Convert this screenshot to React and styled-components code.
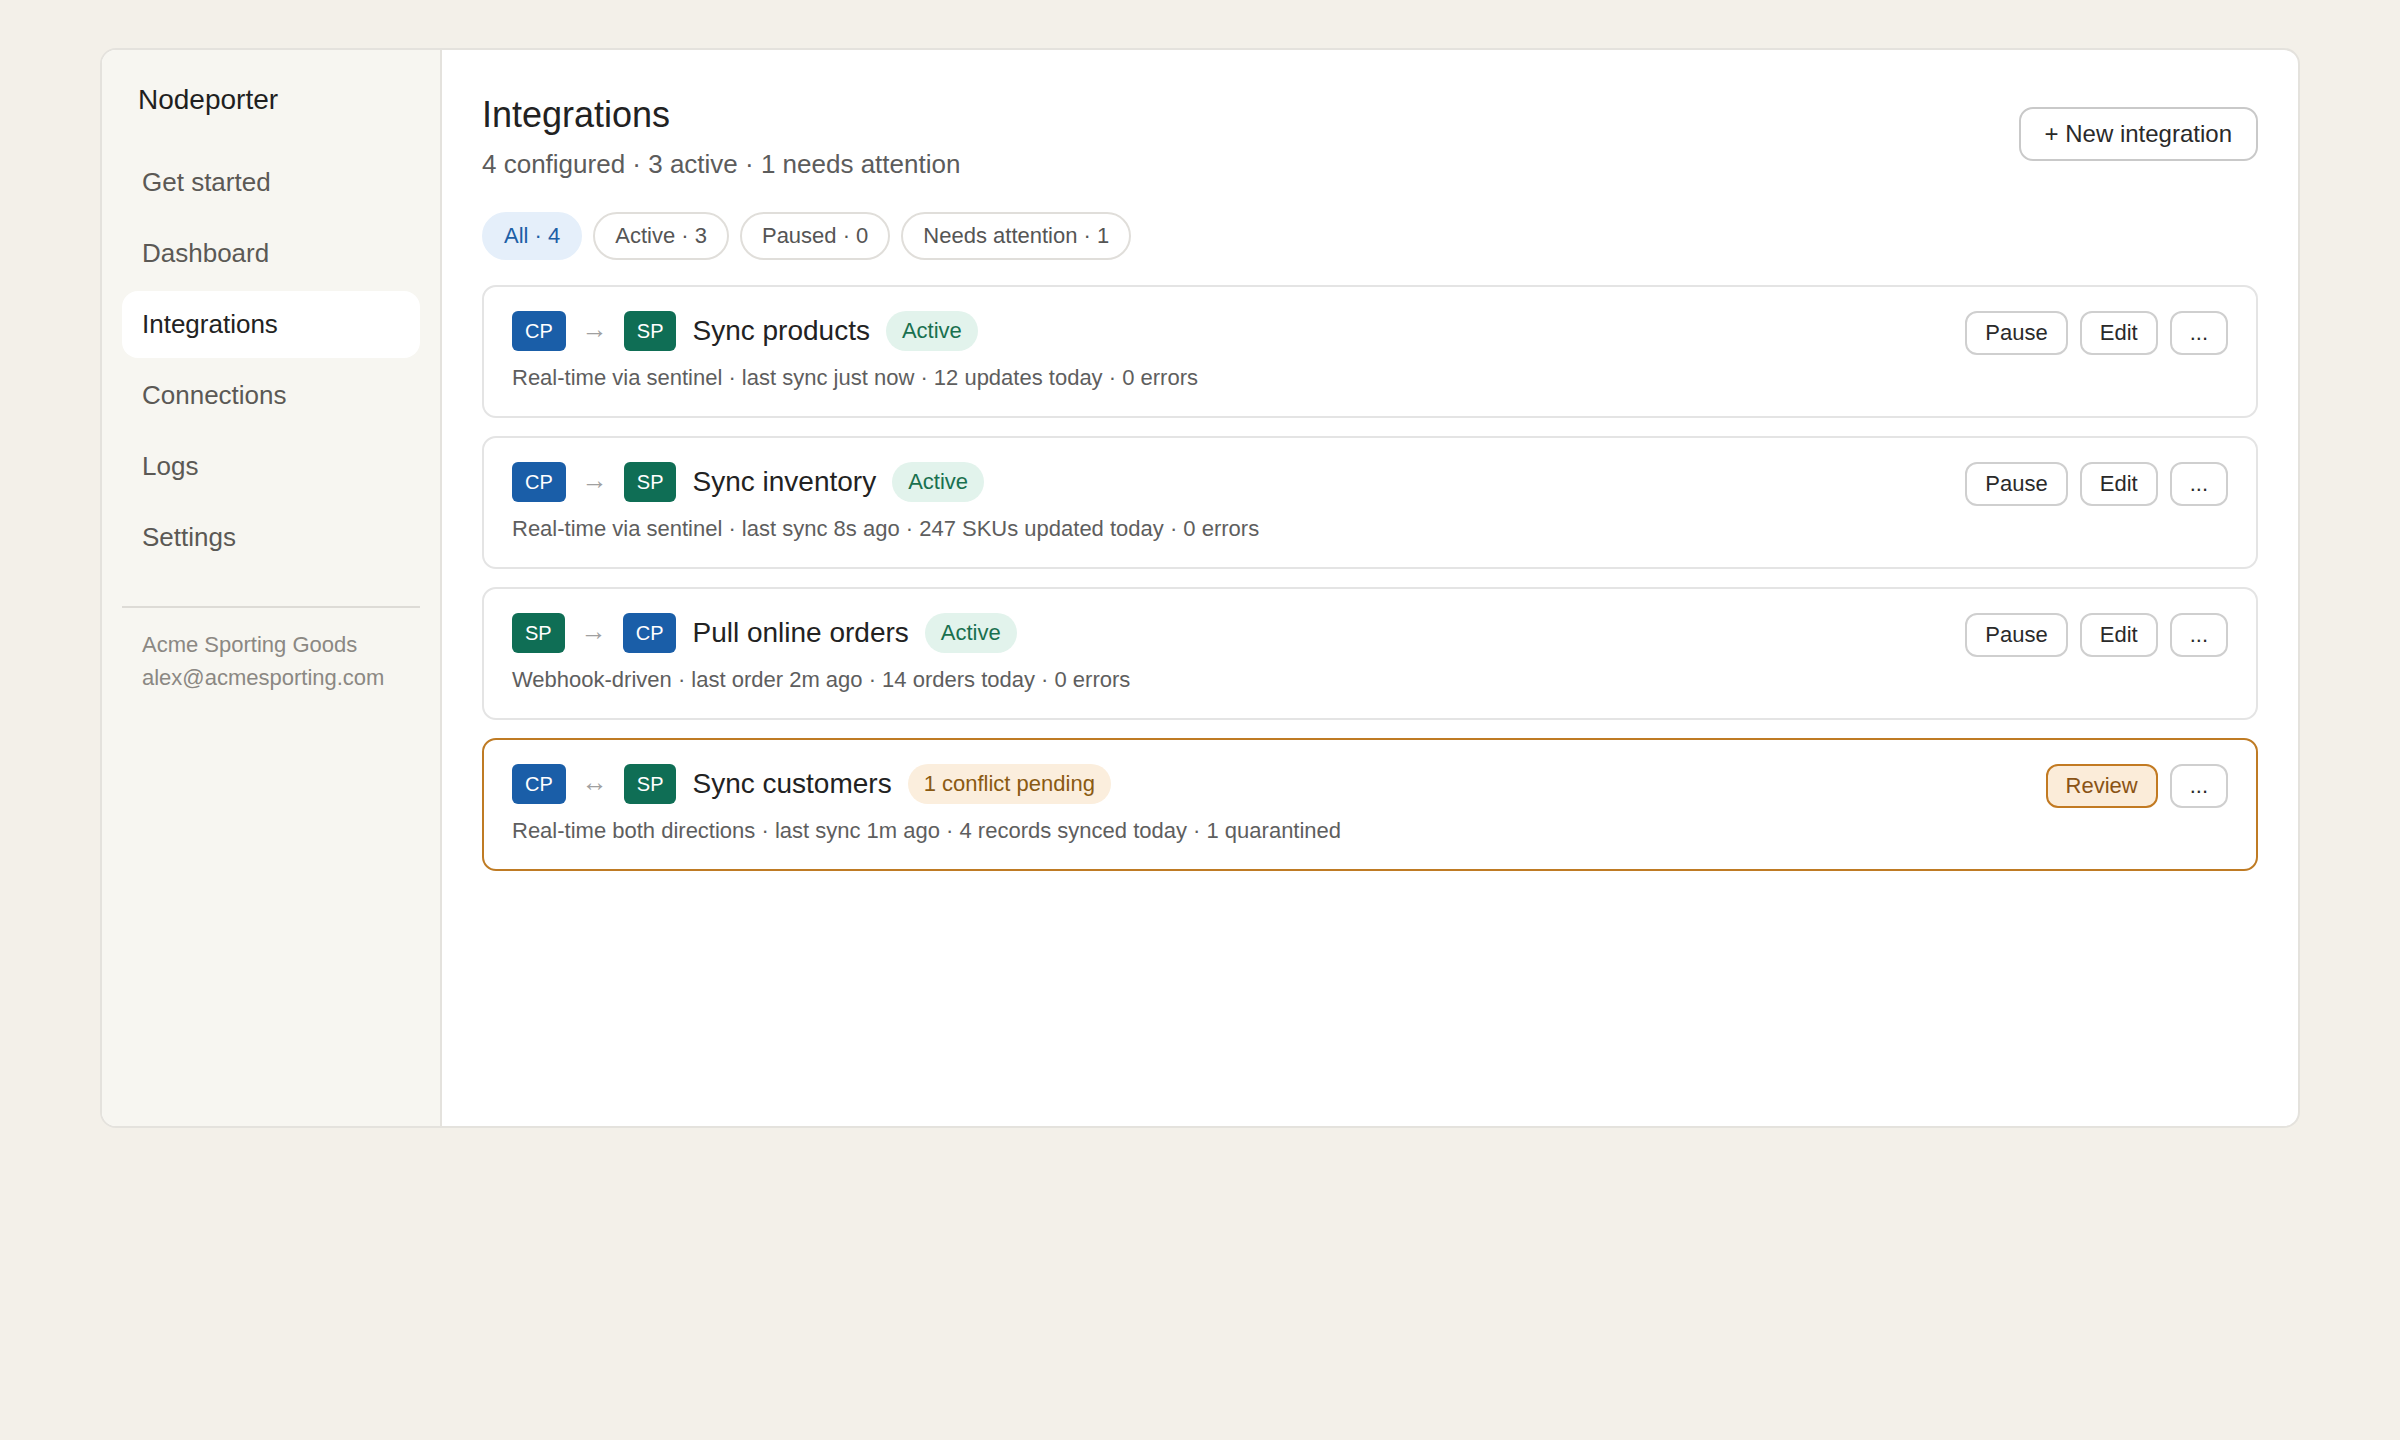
import React from 'react';
import { styled, createGlobalStyle } from 'styled-components';

const GlobalStyle = createGlobalStyle`
    body {
        margin: 0;
        background: #f3f0e9;
        font-family: "Liberation Sans", Arial, sans-serif;
        color: #222;
    }
    * {
        box-sizing: border-box;
    }
`;

const Shell = styled.div`
    display: flex;
    width: 2200px;
    height: 1080px;
    margin: 48px auto 0;
    background: #fff;
    border: 2px solid #e4e2dd;
    border-radius: 16px;
    overflow: hidden;
`;

const Sidebar = styled.aside`
    width: 340px;
    flex-shrink: 0;
    background: #f7f6f1;
    border-right: 2px solid #e4e2dd;
    padding: 34px 20px;
`;

const Brand = styled.div`
    font-size: 28px;
    line-height: 32px;
    padding: 0 16px;
    color: #1f1f1f;
`;

const Nav = styled.nav`
    display: flex;
    flex-direction: column;
    gap: 4px;
    margin-top: 33px;
`;

const NavItem = styled.div`
    padding: 18px 20px;
    font-size: 26px;
    line-height: 31px;
    border-radius: 16px;
    color: ${(p) => (p.$active ? '#222' : '#5b5955')};
    background: ${(p) => (p.$active ? '#fff' : 'transparent')};
`;

const Divider = styled.hr`
    margin: 35px 0 0;
    border: none;
    height: 2px;
    background: #dddbd6;
`;

const Account = styled.div`
    padding: 20px 20px 0;
    font-size: 22px;
    line-height: 33px;
    color: #8b8883;
`;

const Main = styled.main`
    flex: 1;
    padding: 43px 40px;
`;

const Header = styled.div`
    display: flex;
    justify-content: space-between;
    align-items: flex-start;
`;

const Title = styled.h1`
    margin: 0;
    font-size: 36px;
    line-height: 43px;
    font-weight: normal;
    color: #222;
`;

const Subtitle = styled.div`
    margin-top: 9px;
    font-size: 26px;
    line-height: 39px;
    color: #5c5c5c;
`;

const PrimaryButton = styled.button`
    margin-top: 14px;
    height: 54px;
    padding: 0 24px;
    font-family: inherit;
    font-size: 24px;
    color: #2a2a2a;
    background: #fff;
    border: 2px solid #c9c9c9;
    border-radius: 14px;
`;

const Filters = styled.div`
    display: flex;
    gap: 11px;
    margin-top: 28px;
`;

const FilterPill = styled.div`
    display: flex;
    align-items: center;
    height: 48px;
    padding: 0 20px;
    font-size: 22px;
    border-radius: 24px;
    border: 2px solid ${(p) => (p.$active ? '#e5effa' : '#e0deda')};
    background: ${(p) => (p.$active ? '#e5effa' : '#fff')};
    color: ${(p) => (p.$active ? '#1d5fa6' : '#555')};
`;

const List = styled.div`
    display: flex;
    flex-direction: column;
    gap: 18px;
    margin-top: 25px;
`;

const Card = styled.div`
    display: flex;
    justify-content: space-between;
    align-items: flex-start;
    padding: 24px 28px 22px;
    border: 2px solid ${(p) => (p.$warn ? '#bf7b24' : '#e4e4e4')};
    border-radius: 14px;
`;

const Row = styled.div`
    display: flex;
    align-items: center;
    gap: 16px;
    height: 40px;
`;

const SystemBadge = styled.span`
    display: flex;
    align-items: center;
    height: 40px;
    padding: 0 13px;
    border-radius: 6px;
    font-size: 20px;
    color: #fff;
    background: ${(p) => (p.$kind === 'CP' ? '#1a5ea8' : '#0f6e55')};
`;

const Arrow = styled.span`
    font-size: 26px;
    line-height: 1;
    color: #a0a0a0;
    width: 26px;
    text-align: center;
    padding-bottom: 4px;
`;

const Name = styled.span`
    font-size: 28px;
    color: #222;
`;

const Status = styled.span`
    display: flex;
    align-items: center;
    height: 40px;
    padding: 0 16px;
    border-radius: 20px;
    font-size: 22px;
    color: ${(p) => (p.$warn ? '#8a5a12' : '#19704f')};
    background: ${(p) => (p.$warn ? '#fbeedd' : '#e2f3ec')};
`;

const Meta = styled.div`
    margin-top: 10px;
    font-size: 22px;
    line-height: 33px;
    color: #5e5e5e;
`;

const Actions = styled.div`
    display: flex;
    gap: 12px;
`;

const ActionButton = styled.button`
    height: 44px;
    padding: 0 18px;
    font-family: inherit;
    font-size: 22px;
    border-radius: 12px;
    border: 2px solid ${(p) => (p.$warn ? '#c27a22' : '#cfcfcf')};
    background: ${(p) => (p.$warn ? '#fbecd9' : '#fff')};
    color: ${(p) => (p.$warn ? '#8a5314' : '#2a2a2a')};
`;

const navItems = ['Get started', 'Dashboard', 'Integrations', 'Connections', 'Logs', 'Settings'];

const filters = [
    { label: 'All · 4', active: true },
    { label: 'Active · 3' },
    { label: 'Paused · 0' },
    { label: 'Needs attention · 1' },
];

const integrations = [
    {
        from: 'CP', to: 'SP', arrow: '→', name: 'Sync products', status: 'Active',
        meta: 'Real-time via sentinel · last sync just now · 12 updates today · 0 errors',
    },
    {
        from: 'CP', to: 'SP', arrow: '→', name: 'Sync inventory', status: 'Active',
        meta: 'Real-time via sentinel · last sync 8s ago · 247 SKUs updated today · 0 errors',
    },
    {
        from: 'SP', to: 'CP', arrow: '→', name: 'Pull online orders', status: 'Active',
        meta: 'Webhook-driven · last order 2m ago · 14 orders today · 0 errors',
    },
    {
        from: 'CP', to: 'SP', arrow: '↔', name: 'Sync customers', status: '1 conflict pending', warn: true,
        meta: 'Real-time both directions · last sync 1m ago · 4 records synced today · 1 quarantined',
    },
];

const App = () => {
    return (
        <>
            <GlobalStyle />
            <Shell>
                <Sidebar>
                    <Brand>Nodeporter</Brand>
                    <Nav>
                        {navItems.map((item) => (
                            <NavItem key={item} $active={item === 'Integrations'}>{item}</NavItem>
                        ))}
                    </Nav>
                    <Divider />
                    <Account>
                        <div>Acme Sporting Goods</div>
                        <div>alex@acmesporting.com</div>
                    </Account>
                </Sidebar>
                <Main>
                    <Header>
                        <div>
                            <Title>Integrations</Title>
                            <Subtitle>4 configured · 3 active · 1 needs attention</Subtitle>
                        </div>
                        <PrimaryButton>+ New integration</PrimaryButton>
                    </Header>
                    <Filters>
                        {filters.map((f) => (
                            <FilterPill key={f.label} $active={f.active}>{f.label}</FilterPill>
                        ))}
                    </Filters>
                    <List>
                        {integrations.map((it) => (
                            <Card key={it.name} $warn={it.warn}>
                                <div>
                                    <Row>
                                        <SystemBadge $kind={it.from}>{it.from}</SystemBadge>
                                        <Arrow>{it.arrow}</Arrow>
                                        <SystemBadge $kind={it.to}>{it.to}</SystemBadge>
                                        <Name>{it.name}</Name>
                                        <Status $warn={it.warn}>{it.status}</Status>
                                    </Row>
                                    <Meta>{it.meta}</Meta>
                                </div>
                                <Actions>
                                    {it.warn ? (
                                        <ActionButton $warn>Review</ActionButton>
                                    ) : (
                                        <>
                                            <ActionButton>Pause</ActionButton>
                                            <ActionButton>Edit</ActionButton>
                                        </>
                                    )}
                                    <ActionButton>...</ActionButton>
                                </Actions>
                            </Card>
                        ))}
                    </List>
                </Main>
            </Shell>
        </>
    );
};

export default App;
